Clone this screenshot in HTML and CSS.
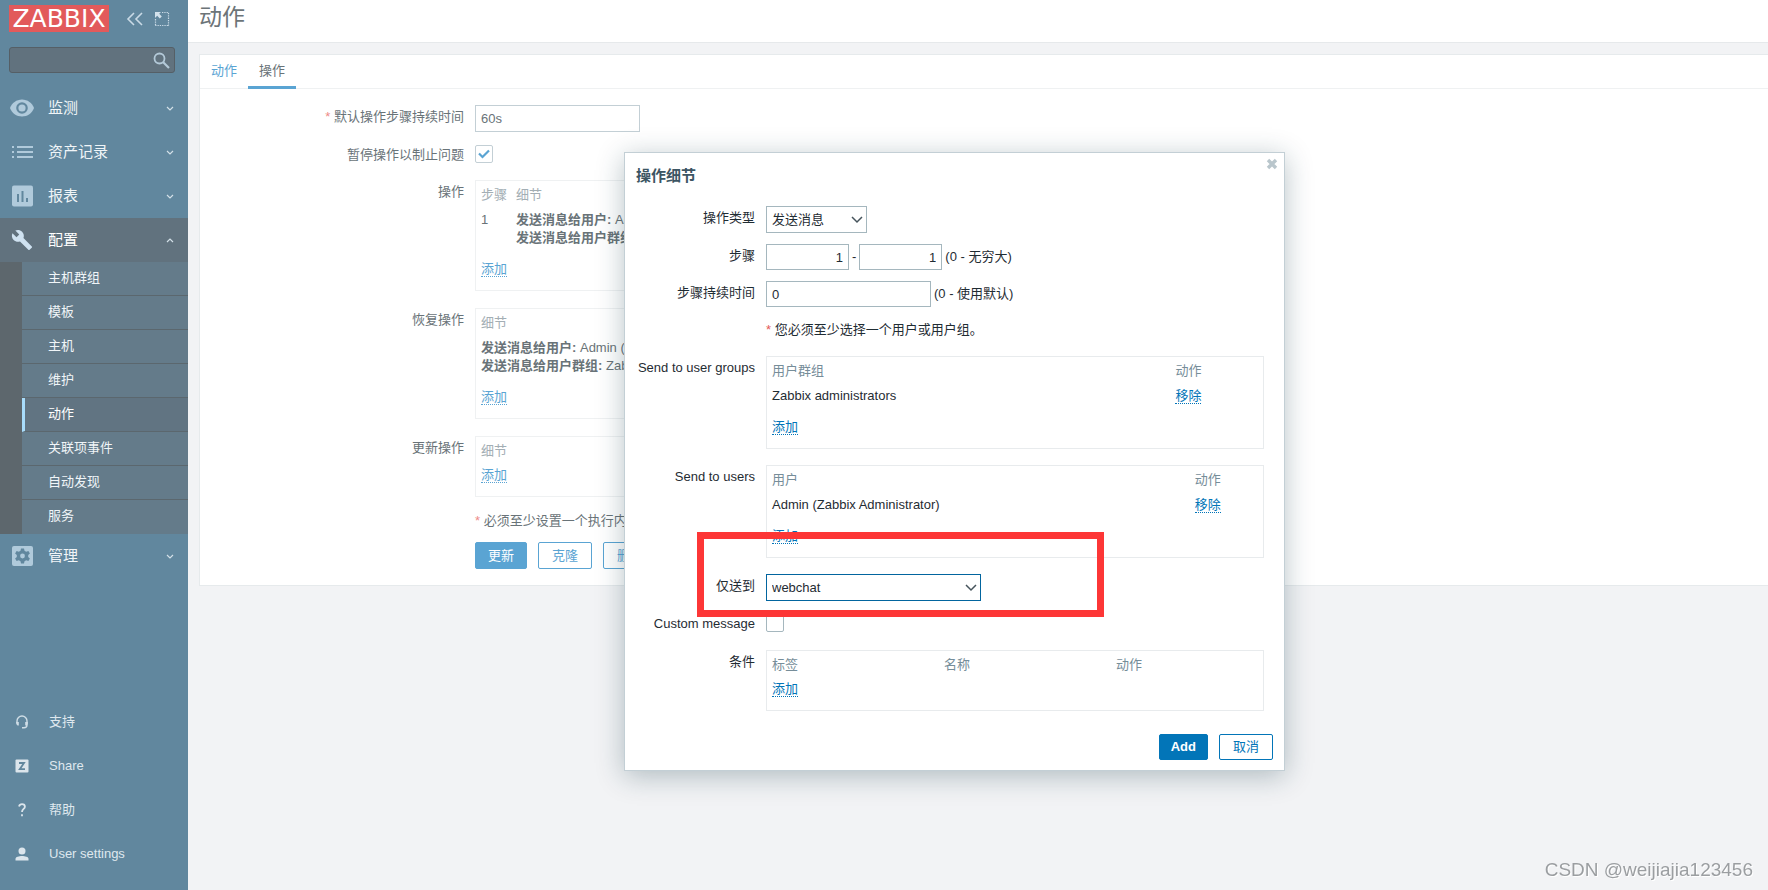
FILE: index.html
```html
<!DOCTYPE html>
<html lang="zh-CN">
<head>
<meta charset="utf-8">
<title>动作</title>
<link rel="stylesheet" href="styles.css">
</head>
<body>
<div class="layout">
  <aside class="sidebar">
    <div class="brand">
      <a class="logo" href="#">ZABBIX</a>
      <button class="icon-btn" type="button" aria-label="收起"><svg width="18" height="14" viewBox="0 0 18 14" fill="none" stroke="#c9dae6" stroke-width="1.6"><path d="M8 1 2 7l6 6M16 1l-6 6 6 6"/></svg></button>
      <button class="icon-btn" type="button" aria-label="全屏"><svg width="16" height="16" viewBox="0 0 16 16" fill="none" stroke="#c9dae6"><path d="M8 1.500h7M14.500 2v13M14 14.500H1M1.500 14V8" stroke-width="1.200" stroke-dasharray="1.300 1"/><path d="M1 1h6L5.200 2.800l2.600 2.600-2 2-2.600-2.600L1 7z" fill="#d3e2ec" stroke="none"/></svg></button>
    </div>
    <form class="search">
      <input type="text" aria-label="搜索">
      <button type="button" aria-label="搜索"><svg width="17" height="17" viewBox="0 0 17 17" fill="none" stroke="#b3c9d8"><circle cx="6.500" cy="6.500" r="5" stroke-width="1.800"/><path d="m10 10 6 6" stroke-width="2.200"/></svg></button>
    </form>
    <nav class="menu">
      <a class="item" href="#"><svg class="ico" width="26" height="20" viewBox="0 0 26 20"><path d="M13 1.500C7.500 1.500 2.800 5 1 10c1.800 5 6.500 8.500 12 8.500S23.200 15 25 10C23.200 5 18.500 1.500 13 1.500z" fill="#b0cadb"/><circle cx="13" cy="10" r="4.700" fill="none" stroke="#61879e" stroke-width="2.200"/></svg><span>监测</span><svg class="chev" width="8" height="8" viewBox="0 0 8 8"><path d="m1 3 3 3 3-3"/></svg></a>
      <a class="item" href="#"><svg class="ico" width="26" height="20" viewBox="0 0 26 20" fill="#b0cadb"><path d="M3 4h2v2H3zM8 4h16v2H8zM3 9h2v2H3zM8 9h16v2H8zM3 14h2v2H3zM8 14h16v2H8z"/></svg><span>资产记录</span><svg class="chev" width="8" height="8" viewBox="0 0 8 8"><path d="m1 3 3 3 3-3"/></svg></a>
      <a class="item" href="#"><svg class="ico" width="26" height="22" viewBox="0 0 26 22"><rect x="3" y=".5" width="21" height="21" rx="2" fill="#b0cadb"/><path d="M8 9h2v8H8zM12.500 6h2v11h-2zM17 13h2v4h-2z" fill="#61879e"/></svg><span>报表</span><svg class="chev" width="8" height="8" viewBox="0 0 8 8"><path d="m1 3 3 3 3-3"/></svg></a>
      <a class="item open" href="#"><svg class="ico" width="26" height="22" viewBox="0 0 24 24"><path d="m22.700 19-9.100-9.100c.9-2.300.4-5-1.500-6.900-2-2-5-2.400-7.400-1.300L9 6 6 9 1.600 4.700C.4 7.100.9 10.100 2.900 12.100c1.900 1.900 4.600 2.400 6.900 1.500l9.100 9.100c.4.4 1 .4 1.400 0l2.300-2.300c.5-.4.5-1.100.1-1.400z" fill="#cfe2f1"/></svg><span>配置</span><svg class="chev" width="8" height="8" viewBox="0 0 8 8"><path d="m1 6 3-3 3 3"/></svg></a>
      <div class="submenu">
        <a href="#">主机群组</a>
        <a href="#">模板</a>
        <a href="#">主机</a>
        <a href="#">维护</a>
        <a class="current" href="#">动作</a>
        <a href="#">关联项事件</a>
        <a href="#">自动发现</a>
        <a href="#">服务</a>
      </div>
      <a class="item" href="#"><svg class="ico" width="26" height="22" viewBox="0 0 26 22"><rect x="3" y="1" width="21" height="20" rx="2" fill="#b0cadb"/><path d="M12 3.500h3l.5 2.300 1.700 1 2.200-.8 1.500 2.600-1.700 1.500v1.800l1.700 1.500-1.500 2.600-2.200-.8-1.700 1-.5 2.300h-3l-.5-2.300-1.700-1-2.200.8-1.500-2.600 1.700-1.500v-1.800L6.100 8.600 7.600 6l2.200.8 1.700-1z" fill="#61879e"/><circle cx="13.500" cy="11" r="2.400" fill="#b0cadb"/></svg><span>管理</span><svg class="chev" width="8" height="8" viewBox="0 0 8 8"><path d="m1 3 3 3 3-3"/></svg></a>
    </nav>
    <nav class="menu-foot">
      <a href="#"><svg width="14" height="14" viewBox="0 0 14 14" fill="none" stroke="#cfdde6" stroke-width="1.400"><path d="M2 8V6a5 5 0 0 1 10 0v4c0 1.800-1 2.700-3 2.700H7"/><path d="M1.200 7h2.600v3.500H2.500L1.200 9zM12.800 7h-2.600v3.500h1.300L12.800 9z" fill="#cfdde6" stroke="none"/></svg><span>支持</span></a>
      <a href="#"><svg width="14" height="14" viewBox="0 0 14 14"><rect x=".5" y=".5" width="13" height="13" rx="1" fill="#dbe5ec"/><path d="M4 4h5L4.800 10.200H10" fill="none" stroke="#61879e" stroke-width="1.800"/></svg><span>Share</span></a>
      <a href="#"><svg width="14" height="14" viewBox="0 0 14 14" fill="none" stroke="#dbe5ec" stroke-width="1.800"><path d="M4 3.400C4.500 1.800 5.600 1.200 7 1.200c1.700 0 2.900 1 2.900 2.500C9.900 6 7 6 7 9M7 11.300v2"/></svg><span>帮助</span></a>
      <a href="#"><svg width="14" height="14" viewBox="0 0 14 14" fill="#dbe5ec"><circle cx="7" cy="4" r="3.500"/><path d="M.5 13.500v-1.700C.5 9.900 4 9 7 9s6.500.9 6.500 2.800v1.700z"/></svg><span>User settings</span></a>
    </nav>
  </aside>

  <main class="page">
    <header class="page-head"><h1>动作</h1></header>
    <section class="card">
      <nav class="tabs"><a href="#">动作</a><a class="active" href="#">操作</a></nav>
      <form class="form">
        <div class="row"><label for="period"><i class="req">*</i> 默认操作步骤持续时间</label><div class="field"><input class="text" id="period" type="text" value="60s"></div></div>
        <div class="row check-row"><label for="pause">暂停操作以制止问题</label><div class="field"><input class="check" id="pause" type="checkbox" checked><svg class="tick" width="12" height="10" viewBox="0 0 12 10"><path d="m1 4.500 3.500 3.500L11 1.500"/></svg></div></div>
        <div class="row table-row"><span class="label">操作</span><div class="field"><div class="box">
          <table><thead><tr><th class="steps">步骤</th><th>细节</th></tr></thead>
          <tbody><tr><td>1</td><td><b>发送消息给用户:</b> Admin (Zabbix Administrator)<br><b>发送消息给用户群组:</b> Zabbix administrators</td></tr></tbody></table>
          <p class="add"><a href="#">添加</a></p></div></div></div>
        <div class="row table-row"><span class="label">恢复操作</span><div class="field"><div class="box">
          <table><thead><tr><th>细节</th></tr></thead>
          <tbody><tr><td><b>发送消息给用户:</b> Admin (Zabbix Administrator)<br><b>发送消息给用户群组:</b> Zabbix administrators</td></tr></tbody></table>
          <p class="add"><a href="#">添加</a></p></div></div></div>
        <div class="row note-before"><span class="label">更新操作</span><div class="field"><div class="box">
          <table><thead><tr><th>细节</th></tr></thead></table>
          <p class="add first"><a href="#">添加</a></p></div></div></div>
        <div class="row button-before"><span class="label"></span><div class="field note"><i class="req">*</i> 必须至少设置一个执行内容。</div></div>
        <div class="row"><span class="label"></span><div class="field buttons"><button class="btn primary" type="button">更新</button><button class="btn" type="button">克隆</button><button class="btn" type="button">删除</button><button class="btn" type="button">取消</button></div></div>
      </form>
    </section>
  </main>
</div>

<div class="modal" role="dialog" aria-labelledby="modal-title">
  <button class="close" type="button" aria-label="关闭"><svg width="12" height="12" viewBox="0 0 12 12"><path d="m2 2 8 8M10 2l-8 8"/></svg></button>
  <h2 id="modal-title">操作细节</h2>
  <form class="modal-form">
    <div class="row"><label for="optype">操作类型</label><div class="field"><span class="select type"><select id="optype"><option>发送消息</option></select><svg width="12" height="8" viewBox="0 0 12 8"><path d="m1 1 5 5 5-5"/></svg></span></div></div>
    <div class="row"><label for="step-from">步骤</label><div class="field inline"><input class="text num" id="step-from" type="text" value="1"><span>-</span><input class="text num" type="text" value="1" aria-label="步骤至"><span>(0 - 无穷大)</span></div></div>
    <div class="row"><label for="duration">步骤持续时间</label><div class="field inline"><input class="text" id="duration" type="text" value="0"><span>(0 - 使用默认)</span></div></div>
    <div class="row note-before"><span class="label"></span><div class="field note"><i class="req">*</i> 您必须至少选择一个用户或用户组。</div></div>
    <div class="row table-row"><span class="label">Send to user groups</span><div class="field"><div class="box">
      <table class="groups"><thead><tr><th>用户群组</th><th>动作</th></tr></thead><tbody><tr><td>Zabbix administrators</td><td><a href="#">移除</a></td></tr></tbody></table>
      <p class="add"><a href="#">添加</a></p></div></div></div>
    <div class="row table-row"><span class="label">Send to users</span><div class="field"><div class="box">
      <table class="users"><thead><tr><th>用户</th><th>动作</th></tr></thead><tbody><tr><td>Admin (Zabbix Administrator)</td><td><a href="#">移除</a></td></tr></tbody></table>
      <p class="add"><a href="#">添加</a></p></div></div></div>
    <div class="row"><label for="media">仅送到</label><div class="field"><span class="select media"><select id="media"><option>webchat</option></select><svg width="12" height="8" viewBox="0 0 12 8"><path d="m1 1 5 5 5-5"/></svg></span></div></div>
    <div class="row check-row"><label for="custom">Custom message</label><div class="field"><input class="check" id="custom" type="checkbox"></div></div>
    <div class="row"><span class="label">条件</span><div class="field"><div class="box">
      <table class="conds"><thead><tr><th>标签</th><th>名称</th><th>动作</th></tr></thead></table>
      <p class="add first"><a href="#">添加</a></p></div></div></div>
  </form>
  <footer class="modal-foot"><button class="btn primary" type="button">Add</button><button class="btn" type="button">取消</button></footer>
  <div class="highlight"></div>
</div>
<div class="watermark">CSDN @weijiajia123456</div>
</body>
</html>
```
FILE: styles.css
```css
* { box-sizing: border-box; }
body {
  --text: #697378;
  --muted: #a3aeb4;
  --link: #5aa4d3;
  --line: #eff1f2;
  --control: #c3cfd5;
  --req: #ee8a88;
  margin: 0;
  background: #f2f3f5;
  color: var(--text);
  font: 13px/18px "Liberation Sans", "Noto Sans CJK SC", sans-serif;
  overflow: hidden;
}
a { color: var(--link); text-decoration: none; }
button, input, select { font: inherit; color: inherit; margin: 0; }
button { cursor: pointer; }
h1, h2, p { margin: 0; }

.layout { display: flex; min-height: 100vh; }

/* Sidebar */
.sidebar { width: 188px; flex: none; display: flex; flex-direction: column; background: #61879e; }
.brand { display: flex; align-items: center; padding: 5px 9px 0; }
.logo { width: 100px; margin-right: 17px; background: #e25a5b; color: #fff; font: 25px/27px "DejaVu Sans", sans-serif; text-align: center; }
.icon-btn { display: flex; padding: 0; border: 0; background: none; }
.icon-btn + .icon-btn { margin-left: 10px; }
.search { display: flex; margin: 15px 13px 0 9px; height: 26px; border: 1px solid #555f66; border-radius: 3px; background: #61727e; }
.search input { flex: 1; min-width: 0; border: 0; background: none; }
.search button { display: flex; padding: 4px 4px 0 0; border: 0; background: none; }
.menu { margin-top: 13px; }
.item { display: flex; align-items: center; height: 44px; padding: 0 14px 0 9px; color: #f0f5f8; font-size: 15px; line-height: 44px; }
.item span { flex: 1; margin-left: 13px; }
.item.open { background: #61727e; color: #fff; }
.ico { flex: none; }
.chev { fill: none; stroke: #d3e0e8; stroke-width: 1.200; }
.submenu { border-left: 22px solid #5d676d; }
.submenu a { display: block; height: 34px; padding-left: 26px; border-bottom: 1px solid #5b676e; background: #647b8a; color: #f0f5f8; line-height: 32px; }
.submenu a:last-child { border-bottom: 0; }
.submenu .current { padding-left: 23px; border-left: 3px solid #a8dcfb; background: #617482; color: #fff; }
.menu-foot { margin-top: auto; padding-bottom: 14px; }
.menu-foot a { display: flex; align-items: center; height: 44px; padding-left: 15px; gap: 20px; color: #dfe8ee; }

/* Page */
.page { flex: 1; min-width: 0; }
.page-head { height: 43px; padding-left: 11px; background: #fff; border-bottom: 1px solid #e6e9eb; }
h1 { font-size: 23px; font-weight: 400; line-height: 35px; color: #6c7478; }
.card { margin: 11px 0 0 11px; padding-bottom: 16px; background: #fff; border: 1px solid #e6eaec; border-right: 0; }
.tabs { display: flex; height: 34px; border-bottom: 1px solid var(--line); }
.tabs a { height: 34px; padding: 0 11px; line-height: 32px; }
.tabs .active { border-bottom: 3px solid var(--link); color: var(--text); }

/* Form rows */
.form { padding-top: 16px; }
.row { display: grid; grid-template-columns: 264px 1fr; column-gap: 11px; margin-bottom: 11px; }
.row:last-child { margin-bottom: 0; }
.row > label, .row > .label { text-align: right; line-height: 24px; }
.row.check-row { margin-bottom: 13px; }
.row.table-row { margin-bottom: 17px; }
.row.note-before { margin-bottom: 12px; }
.row.button-before { margin-bottom: 9px; }
.form .box { width: 640px; }
.field { position: relative; min-width: 0; }
.note { line-height: 24px; }
.req { color: var(--req); font-style: normal; }
.text { display: block; width: 165px; height: 27px; padding: 0 5px; border: 1px solid var(--control); background: #fff; }
.check { display: block; appearance: none; width: 18px; height: 18px; margin-top: 2px; border: 1px solid var(--control); border-radius: 2px; background: #fff; }
.tick { position: absolute; left: 3px; top: 6px; fill: none; stroke: var(--link); stroke-width: 2.200; pointer-events: none; }
.box { padding: 2px 5px 12px; border: 1px solid var(--line); }
table { width: 100%; border-collapse: collapse; }
th { height: 24px; padding: 0; color: var(--muted); font-weight: 400; text-align: left; }
td { padding: 4px 0 0; vertical-align: top; }
.steps { width: 35px; }
.add { margin-top: 13px; line-height: 18px; }
.add.first { margin-top: 3px; }
.add a, td a { display: inline-block; height: 17px; line-height: 17px; border-bottom: 1px dotted; }
.buttons { display: flex; gap: 11px; }
.btn { height: 27px; padding: 0 13px; border: 1px solid var(--link); border-radius: 2px; background: #fff; color: var(--link); line-height: 25px; }
.btn.primary { padding: 0 12px; background: var(--link); color: #fff; }

/* Dialog */
.modal {
  --text: #1f2c33;
  --muted: #768d99;
  --link: #0275b8;
  --line: #e8ebed;
  --control: #a5b7be;
  --req: #e45959;
  position: absolute;
  left: 624px;
  top: 152px;
  width: 661px;
  padding: 12px 11px 10px;
  border: 1px solid #c3cfd5;
  background: #fff;
  color: var(--text);
  box-shadow: 0 5px 26px rgba(20, 55, 70, .3);
}
h2 { font-size: 15px; line-height: 22px; color: #3c5563; }
.close { position: absolute; right: 6px; top: 5px; display: flex; padding: 0; border: 0; background: none; }
.close path { stroke: #b9c6cc; stroke-width: 3.400; }
.modal-form { padding: 19px 9px 0 0; }
.modal-form .row { grid-template-columns: 119px 1fr; }
.modal-form .note-before { margin-bottom: 14px; }
.modal-form .table-row { margin-bottom: 16px; }
.modal-form .check-row { margin-bottom: 14px; }
.modal-form .text { height: 26px; }
.inline { display: flex; align-items: center; gap: 3px; }
.modal-form .num { width: 83px; text-align: right; }
.select { position: relative; display: block; }
.select select { appearance: none; display: block; width: 100%; height: 27px; padding: 0 5px; border: 1px solid var(--control); border-radius: 0; background: #fff; }
.select svg { position: absolute; right: 4px; top: 10px; fill: none; stroke: #46545c; stroke-width: 1.500; pointer-events: none; }
.select.type { width: 101px; }
.select.media { width: 215px; }
.select.media select { border-color: #02659f; }
.groups th:first-child { width: 83%; }
.users th:first-child { width: 87%; }
.conds { table-layout: fixed; }
.conds th { width: 172px; }
.conds th:last-child { width: auto; }
.modal-foot { display: flex; justify-content: flex-end; gap: 11px; margin-top: 23px; }
.modal-foot .btn { height: 26px; line-height: 24px; }
.modal-foot .primary { padding: 0 11px; font-weight: 700; }

/* Marker drawn over the media field */
.highlight { position: absolute; left: 72px; top: 379px; width: 407px; height: 85px; border: 7px solid #fd3636; pointer-events: none; }
.watermark { position: fixed; right: 15px; bottom: 8px; color: #9b9ea1; font-size: 19px; line-height: 24px; text-shadow: 1px 1px 0 #fff; }
```
